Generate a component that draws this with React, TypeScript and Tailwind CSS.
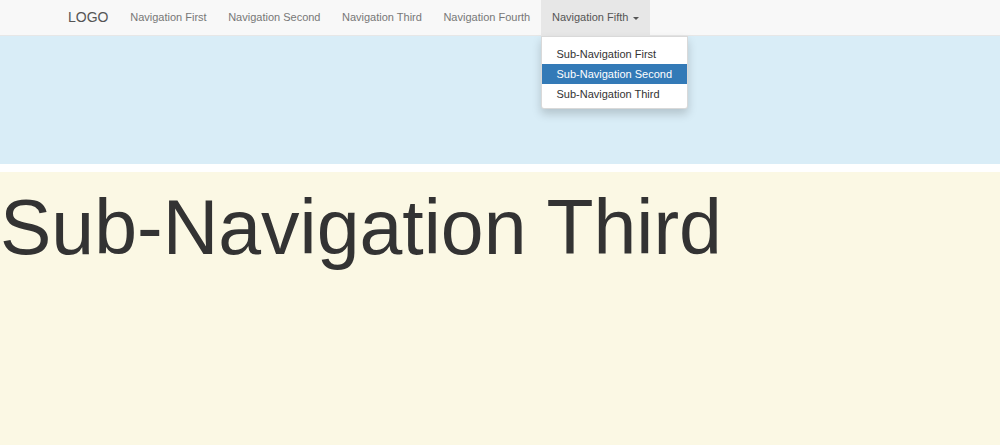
import React from 'react';

const links = ['Navigation First', 'Navigation Second', 'Navigation Third', 'Navigation Fourth'];
const subLinks = ['Sub-Navigation First', 'Sub-Navigation Second', 'Sub-Navigation Third'];

function Navbar() {
  return (
    <nav className="relative z-10 h-[36px] bg-[#f8f8f8] border-b border-[#e7e7e7]">
      <div className="flex h-[35px] pl-[57px]">
        <a className="flex items-center px-[11px] text-[14px] text-[#555]">LOGO</a>
        <ul className="flex">
          {links.map(l => (
            <li key={l}>
              <a className="flex h-[35px] items-center px-[10.75px] text-[11px] text-[#777]">{l}</a>
            </li>
          ))}
          <li className="relative">
            <a className="flex h-[35px] items-center px-[11px] text-[11px] text-[#555] bg-[#e7e7e7]">
              Navigation Fifth
              <span className="ml-[5px] mt-[1px] w-0 h-0 border-x-[3px] border-x-transparent border-t-[3px] border-t-[#555]" />
            </a>
            <ul className="absolute left-0 top-[36px] bg-white border border-black/15 rounded-b-[3px] shadow-[0_5px_10px_rgba(0,0,0,0.175)] pt-[7px] pb-[4px] whitespace-nowrap">
              {subLinks.map((s, i) => (
                <li key={s}>
                  <a
                    className={
                      i === 1
                        ? 'block h-[20px] leading-[20px] px-[14.5px] text-[11px] bg-[#337ab7] text-white'
                        : 'block h-[20px] leading-[20px] px-[14.5px] text-[11px] text-[#333]'
                    }
                  >
                    {s}
                  </a>
                </li>
              ))}
            </ul>
          </li>
        </ul>
      </div>
    </nav>
  );
}

export default function App() {
  return (
    <div className="min-h-[445px] flex flex-col bg-white font-['Liberation_Sans',Arial,sans-serif]">
      <Navbar />
      <section className="h-[128px] bg-[#d9edf7]" />
      <section className="flex-1 mt-[8px] bg-[#fbf8e4] overflow-hidden">
        <h1 className="mt-[13px] text-[77px] leading-[1.1] text-[#333] whitespace-nowrap">Sub-Navigation Third</h1>
      </section>
    </div>
  );
}
